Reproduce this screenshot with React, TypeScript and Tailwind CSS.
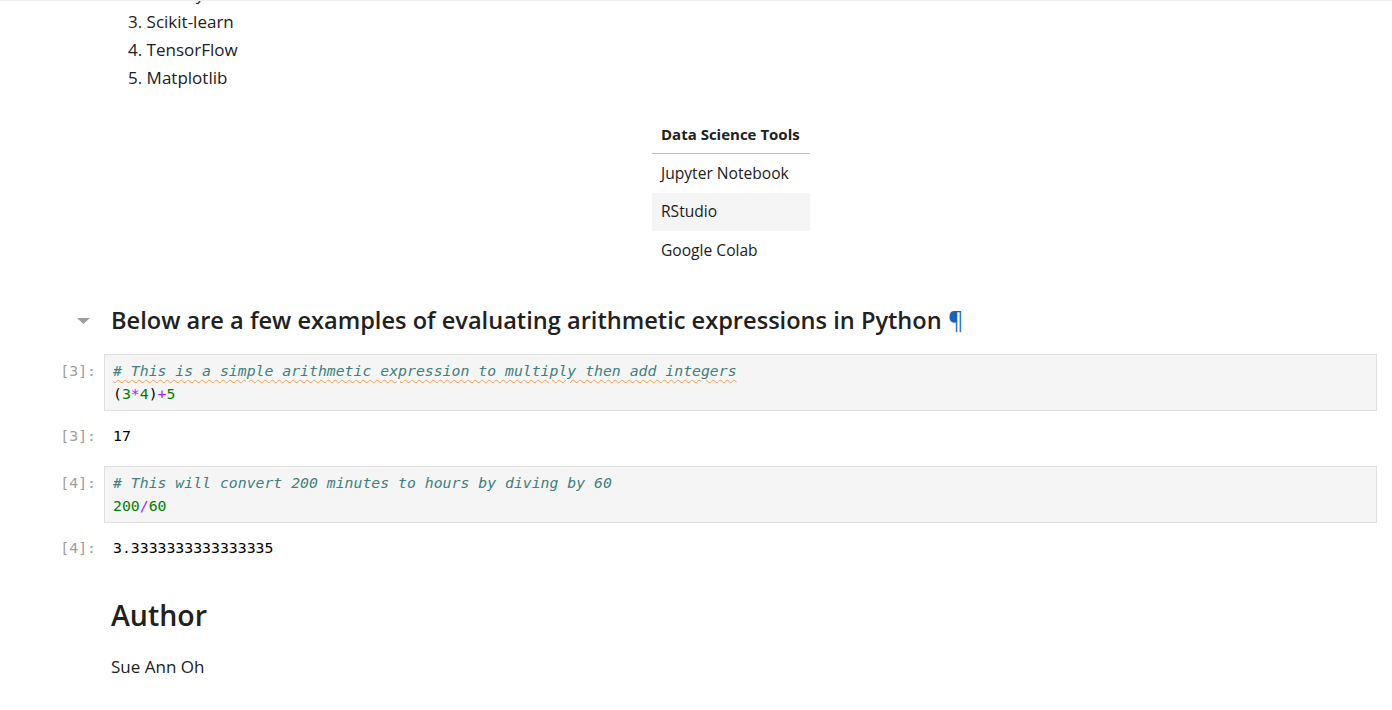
import React from "react"

const sans = { fontFamily: '"Open Sans", "Noto Sans", sans-serif' }
const mono = { fontFamily: '"DejaVu Sans Mono", "Liberation Mono", monospace' }

function Prompt({ label, top = "pt-[5px]" }: { label: string; top?: string }) {
  return (
    <div
      className={`w-[104px] shrink-0 pr-[8px] text-right text-[14.8px] leading-[23px] text-[#9e9e9e] ${top}`}
      style={mono}
    >
      [{label}]:
    </div>
  )
}

function CodeCell({ label, children }: { label: string; children: React.ReactNode }) {
  return (
    <div className="flex pr-[15px]">
      <Prompt label={label} />
      <div
        className="flex-1 border border-[#e0e0e0] bg-[#f5f5f5] px-[8px] pt-[4px] pb-[5px] text-[14.8px] leading-[23px] text-black"
        style={mono}
      >
        {children}
      </div>
    </div>
  )
}

function Output({ label, value }: { label: string; value: string }) {
  return (
    <div className="flex">
      <Prompt label={label} top="pt-0" />
      <div className="pl-[9px] text-[14.8px] leading-[23px] text-black" style={mono}>
        {value}
      </div>
    </div>
  )
}

const tools = ["Jupyter Notebook", "RStudio", "Google Colab"]

export default function App() {
  return (
    <div className="h-[710px] overflow-hidden bg-white border-t border-[#eeeeee] text-[#212121]" style={sans}>
      <div className="-mt-[21px]">
        {/* rest of the ordered list */}
        <div className="pl-[128px] text-[17px] leading-[28px]">
          <div>2. NumPy</div>
          <div>3. Scikit-learn</div>
          <div>4. TensorFlow</div>
          <div>5. Matplotlib</div>
        </div>

        {/* table */}
        <div className="ml-[652px] mt-[24px] w-[158px] text-[15.6px]">
          <div className="border-b border-[#bdbdbd] px-[9px] h-[38px] flex items-center font-bold text-[15px]">
            Data Science Tools
          </div>
          {tools.map((t, i) => (
            <div
              key={t}
              className={`px-[9px] h-[38.5px] flex items-center ${i === 1 ? "bg-[#f5f5f5]" : ""}`}
            >
              {t}
            </div>
          ))}
        </div>

        {/* heading */}
        <div className="mt-[33px] flex items-center h-[36px]">
          <div className="w-[104px] shrink-0 flex justify-end pr-[14px]">
            <svg width="13" height="6" viewBox="0 0 13 6">
              <path d="M0 0 L13 0 L6.5 6 Z" fill="#9e9e9e" />
            </svg>
          </div>
          <h2 className="pl-[7px] text-[23.6px] font-semibold text-[#212121]">
            Below are a few examples of evaluating arithmetic expressions in Python{" "}
            <span className="text-[#1565c0] font-normal">¶</span>
          </h2>
        </div>

        <div className="mt-[15px]">
          <CodeCell label="3">
            <div className="italic text-[#408080] underline decoration-wavy decoration-[#f5a04a] decoration-1 underline-offset-[3px]">
              # This is a simple arithmetic expression to multiply then add integers
            </div>
            <div>
              (<span className="text-[#008000]">3</span>
              <span className="text-[#aa22ff]">*</span>
              <span className="text-[#008000]">4</span>)
              <span className="text-[#aa22ff]">+</span>
              <span className="text-[#008000]">5</span>
            </div>
          </CodeCell>
        </div>

        <div className="mt-[13px]">
          <Output label="3" value="17" />
        </div>

        <div className="mt-[19px]">
          <CodeCell label="4">
            <div className="italic text-[#408080]"># This will convert 200 minutes to hours by diving by 60</div>
            <div>
              <span className="text-[#008000]">200</span>
              <span className="text-[#aa22ff]">/</span>
              <span className="text-[#008000]">60</span>
            </div>
          </CodeCell>
        </div>

        <div className="mt-[13px]">
          <Output label="4" value="3.3333333333333335" />
        </div>

        <div className="pl-[111px] mt-[36px]">
          <h1 className="text-[28.5px] font-semibold leading-[40px] text-[#212121]">Author</h1>
          <p className="mt-[18px] text-[17px] leading-[28px]">Sue Ann Oh</p>
        </div>
      </div>
    </div>
  )
}
